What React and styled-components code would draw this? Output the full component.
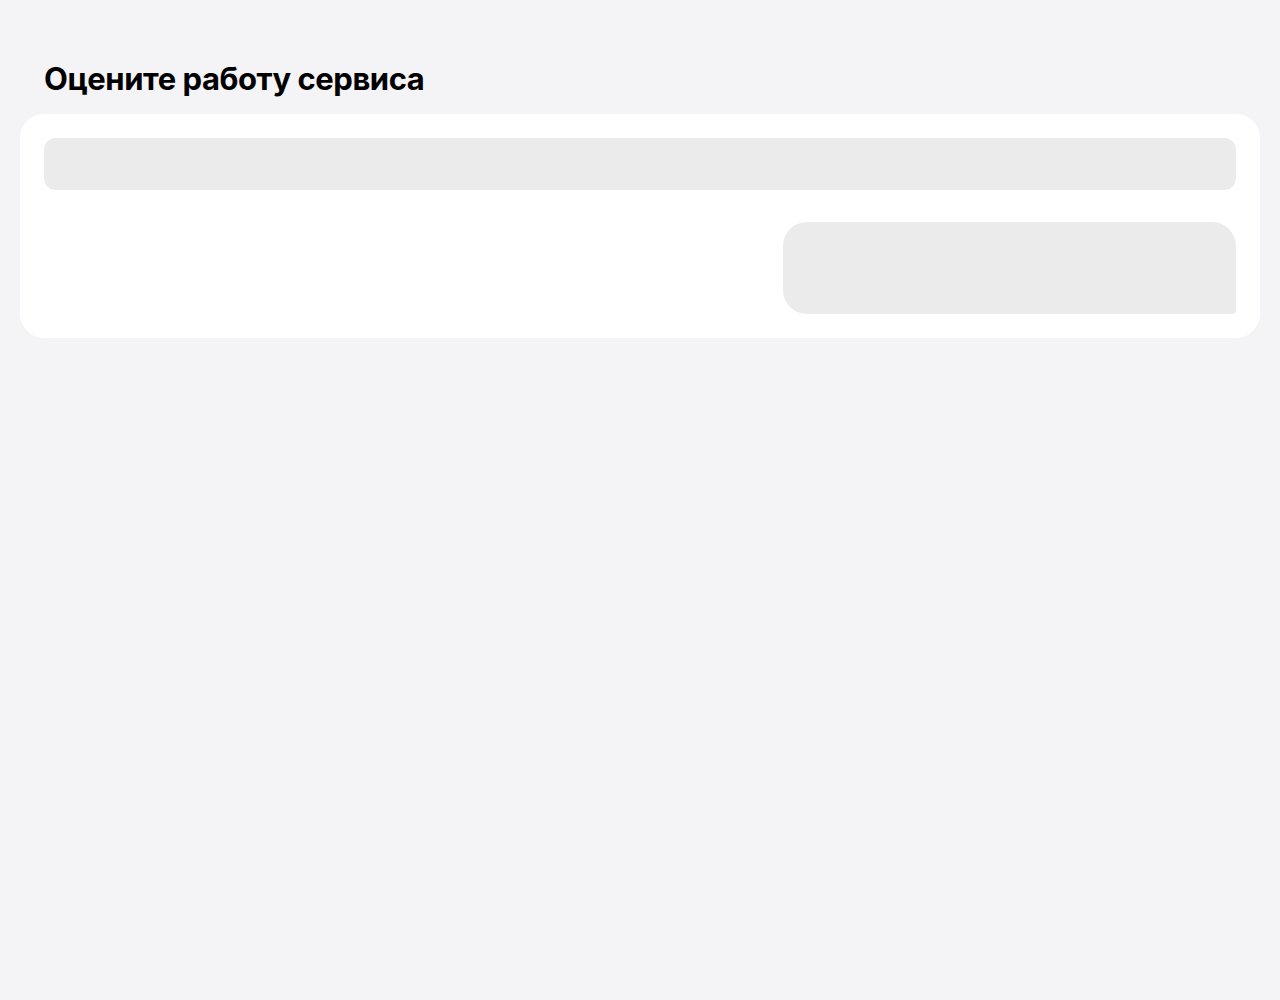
import React from 'react'
import styled, { createGlobalStyle } from 'styled-components'

const GlobalStyle = createGlobalStyle`
body{
margin:0;
background:#f4f4f6;
font-family:Inter, "Noto Sans", sans-serif;
}
`
const Page = styled.div`
display:flex;
flex-direction:column;
padding:59px 20px 0;
`
const Title = styled.h1`
margin:0 0 15px;
padding:0 24px;
font-size:31px;
line-height:40px;
font-weight:700;
color:#000;
letter-spacing:-0.45px;
`
const Card = styled.div`
display:flex;
flex-direction:column;
gap:32px;
padding:24px;
background:#fff;
border-radius:24px;
`
const Skeleton = styled.div`
background:#ebebeb;
height:${({h}) => h}px;
width:${({w}) => w || '100%'};
border-radius:${({r}) => r};
align-self:${({right}) => right ? 'flex-end' : 'stretch'};
`

export default function App() {
  return (
    <Page>
      <GlobalStyle />
      <Title>Оцените работу сервиса</Title>
      <Card>
        <Skeleton h={52} r="12px" />
        <Skeleton h={92} w="453px" r="24px 24px 4px 24px" right />
      </Card>
    </Page>
  )
}
